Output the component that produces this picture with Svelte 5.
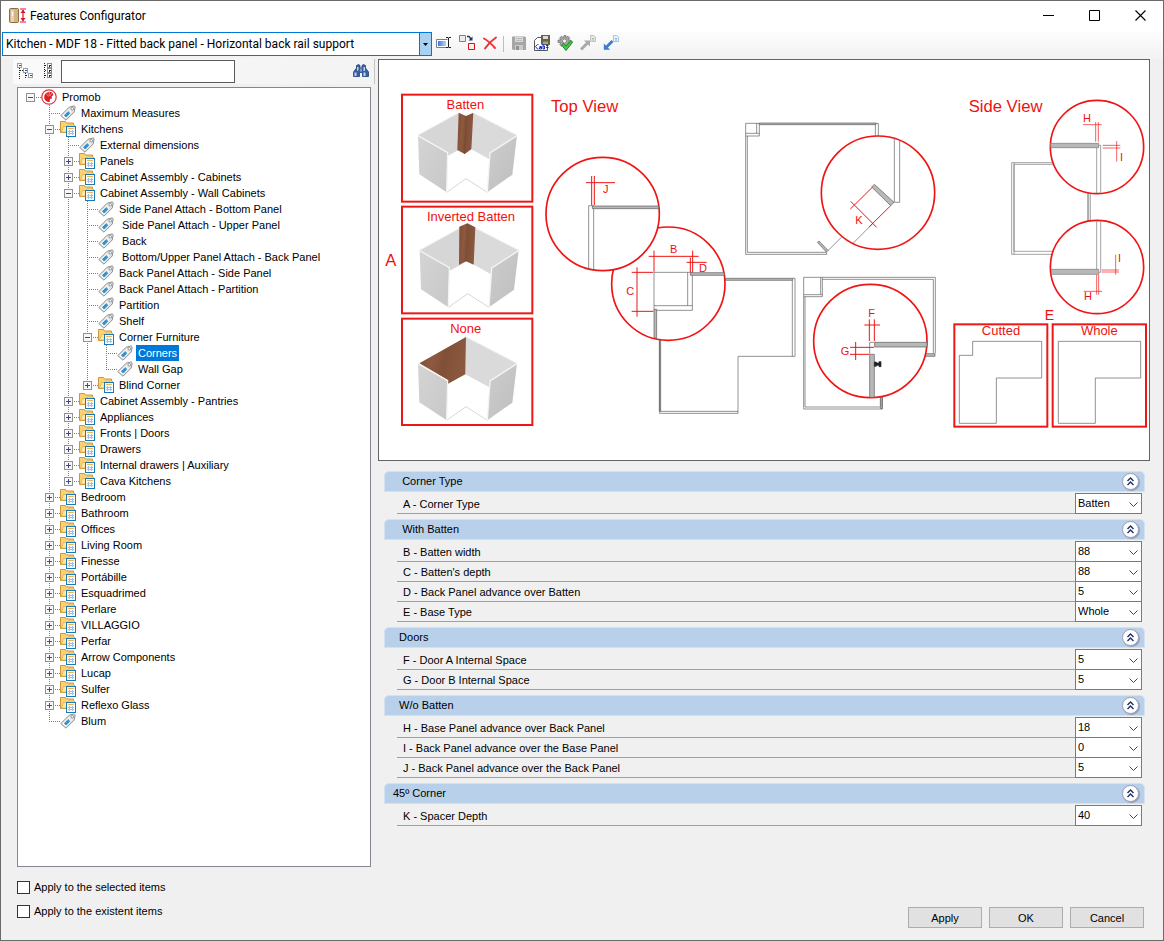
<script>
  const leaf = (name) => ({ name, leaf: true });
  const folder = (name, children = [], open = false) => ({ name, children, open });

  let tree = $state([
    {
      name: 'Promob',
      root: true,
      open: true,
      children: [
        leaf('Maximum Measures'),
        folder('Kitchens', [
          leaf('External dimensions'),
          folder('Panels'),
          folder('Cabinet Assembly - Cabinets'),
          folder('Cabinet Assembly - Wall Cabinets', [
            leaf('Side Panel Attach - Bottom Panel'),
            leaf(' Side Panel Attach - Upper Panel'),
            leaf(' Back'),
            leaf(' Bottom/Upper Panel Attach - Back Panel'),
            leaf('Back Panel Attach - Side Panel'),
            leaf('Back Panel Attach - Partition'),
            leaf('Partition'),
            leaf('Shelf'),
            folder('Corner Furniture', [leaf('Corners'), leaf('Wall Gap')], true),
            folder('Blind Corner')
          ], true),
          folder('Cabinet Assembly - Pantries'),
          folder('Appliances'),
          folder('Fronts | Doors'),
          folder('Drawers'),
          folder('Internal drawers | Auxiliary'),
          folder('Cava Kitchens')
        ], true),
        folder('Bedroom'),
        folder('Bathroom'),
        folder('Offices'),
        folder('Living Room'),
        folder('Finesse'),
        folder('Portábille'),
        folder('Esquadrimed'),
        folder('Perlare'),
        folder('VILLAGGIO'),
        folder('Perfar'),
        folder('Arrow Components'),
        folder('Lucap'),
        folder('Sulfer'),
        folder('Reflexo Glass'),
        leaf('Blum')
      ]
    }
  ]);

  let selected = $state('Corners');

  let sections = $state([
    { title: '   Corner Type', open: true, rows: [['A - Corner Type', 'Batten']] },
    {
      title: '   With Batten',
      open: true,
      rows: [
        ['B - Batten width', '88'],
        ["C - Batten's depth", '88'],
        ['D - Back Panel advance over Batten', '5'],
        ['E - Base Type', 'Whole']
      ]
    },
    {
      title: '  Doors',
      open: true,
      rows: [
        ['F - Door A Internal Space', '5'],
        ['G - Door B Internal Space', '5']
      ]
    },
    {
      title: '  W/o Batten',
      open: true,
      rows: [
        ['H - Base Panel advance over Back Panel', '18'],
        ['I - Back Panel advance over the Base Panel', '0'],
        ['J - Back Panel advance over the Back Panel', '5']
      ]
    },
    { title: '45º Corner', open: true, rows: [['K - Spacer Depth', '40']] }
  ]);
</script>

{#snippet promobIcon()}
  <svg class="icon" viewBox="0 0 16 16">
    <circle cx="8" cy="8" r="7.2" fill="#fff" stroke="#d9363c" stroke-width="1.2" />
    <path d="M7.500 3C9.500 2.400 12 3.400 12.300 6L10.600 7.600l.4 2-2 .4-.3 3C5.500 13 3.200 11 3.200 8.200 3.200 5.500 5 3.500 7.500 3z" fill="#dc1f28" />
    <path d="M8.200 3v4M5.200 4.500l2.300 3M10.800 4l-2 3" stroke="#f29a9c" stroke-width=".8" fill="none" />
  </svg>
{/snippet}

{#snippet tagIcon()}
  <svg class="icon" viewBox="0 0 16 16">
    <path d="M.8 10.600 9.200 2.200 14.200.9l1 .9-1 5.200-8.200 8.200z" fill="#e9e9ea" stroke="#8b8d90" />
    <path d="M2.700 10.700 5.600 13.500 11.200 8 8.300 5.200z" fill="#fff" />
    <path d="M3.900 10.500 6 12.600 10.400 8.200 8.300 6.100z" fill="#3c9bd6" />
    <path d="m5.200 9.400 2 2M6.700 7.900l2 2" stroke="#1f6fa8" stroke-width=".8" />
    <circle cx="12.300" cy="3.800" r="1.300" fill="#fff" stroke="#85878a" stroke-width=".9" />
  </svg>
{/snippet}

{#snippet folderIcon()}
  <svg class="icon" viewBox="0 0 16 16">
    <path d="M.5 11.500v-11h5l1 1.500h7v9.500z" fill="#f9d374" stroke="#d0943a" />
    <path d="M1.500 11 3.500 5.500H8V4h6.500v3l-2 4z" fill="#fde9a4" stroke="#e0ae52" stroke-width=".8" />
    <rect x="6.500" y="5.500" width="9" height="10" fill="#fff" stroke="#1879b4" />
    <path d="M8 7.500h6" stroke="#f2b45a" />
    <path d="M9.500 9v5M12.500 9v5M8 10.500h6M8 12.500h6" stroke="#9cc3e6" />
  </svg>
{/snippet}

{#snippet node(item)}
  <li role="treeitem" aria-selected={selected === item.name} class:top={item.root}>
    <div class="node">
      <span class="branch">
        {#if !item.leaf}
          <button class="toggle" aria-label={item.open ? 'Collapse' : 'Expand'} onclick={() => (item.open = !item.open)}>
            <svg viewBox="0 0 9 9" shape-rendering="crispEdges">
              <rect x=".5" y=".5" width="8" height="8" fill="#f7f7f7" stroke="#919191" />
              <path d={item.open ? 'M2 4.500h5' : 'M2 4.500h5M4.500 2v5'} stroke="#3b4f8c" />
            </svg>
          </button>
        {/if}
      </span>
      {#if item.root}{@render promobIcon()}{:else if item.leaf}{@render tagIcon()}{:else}{@render folderIcon()}{/if}
      <button class="name" class:selected={selected === item.name} onclick={() => (selected = item.name)}>{item.name}</button>
    </div>
    {#if item.open && item.children?.length}
      <ul role="group">
        {#each item.children as child}{@render node(child)}{/each}
      </ul>
    {/if}
  </li>
{/snippet}

{#snippet cabinet(kind)}
  <path d="M200 397 258 356 322 397" fill="none" stroke="#d8d8d8" stroke-width="3" />
  {#if kind === 'none'}
    <path d="M258 147 411 226 330 278 328 298 256 259z" fill="#dadada" />
    <path d="M258 147 118 226 203 276V288L256 259z" fill="url(#wood)" />
    <path d="M258 147 411 226" stroke="#eee" stroke-width="3" />
  {:else}
    <path d="M114 226 257 147V258L203 288z" fill="#d6d6d6" />
    <path d="M257 147 411 226 330 278 328 298 257 258z" fill="#dadada" />
    <path d="M114 226 257 147 411 226" fill="none" stroke="#ececec" stroke-width="3" />
    {#if kind === 'batten'}
      <path d="M232 140H284V160L258 170 234 160z" fill="#fff" />
      <path d="M236 158 258 168 280 158 274 268 254 282 232 270z" fill="url(#wood)" />
      <path d="M258 168 254 282" stroke="#744731" stroke-width="2" />
    {:else}
      <path d="M233 155 257 145 281 157 276 269 253 259 232 270z" fill="url(#wood)" />
      <path d="M257 146 253 259" stroke="#7a4c35" stroke-width="2" />
    {/if}
  {/if}
  <path d="M114 226 203 278 200 397 118 343z" fill="url(#panelLeft)" />
  <path d="M411 226 330 278 322 397 397 344z" fill="url(#panelRight)" />
  <path d="M114 227 203 278 200 397M411 227 330 279 322 397" fill="none" stroke="#f4f4f4" stroke-width="4" />
{/snippet}

<div class="window">
  <header class="titlebar">
    <svg class="app-icon" viewBox="0 0 17 16">
      <rect x=".5" y=".5" width="9" height="14" rx="1" fill="#d3b487" stroke="#8a6c45" />
      <path d="M2 2h3v12H2z" fill="#e8d3b2" />
      <path d="M3.500 4v4" stroke="#fff" />
      <path d="M11 1h6M11 14h6M14 2v11" stroke="#e0142c" stroke-width="1.200" />
      <path d="m11.500 5 2.500-3.500L16.500 5zM11.500 10l2.500 3.500 2.500-3.500z" fill="#e0142c" />
    </svg>
    <h1>Features Configurator</h1>
    <div class="window-buttons">
      <button aria-label="Minimize"><svg viewBox="0 0 11 11"><path d="M0 5.500h11" stroke="#000" /></svg></button>
      <button aria-label="Maximize"><svg viewBox="0 0 11 11"><path d="M.5.5h10v10H.5z" fill="none" stroke="#000" /></svg></button>
      <button aria-label="Close"><svg viewBox="0 0 11 11"><path d="m.5.500 10 10m0-10-10 10" stroke="#000" stroke-width="1.100" /></svg></button>
    </div>
  </header>

  <div class="toolbar">
    <div class="config">
      <select aria-label="Configuration">
        <option>Kitchen - MDF 18 - Fitted back panel - Horizontal back rail support</option>
      </select>
      <span class="config-arrow"><svg viewBox="0 0 5 3"><path d="M0 0h5L2.500 3z" /></svg></span>
    </div>
    <button class="tool" aria-label="Rename">
      <svg viewBox="0 0 16 16">
        <path d="M11.500 4.500H.5v8h12" fill="#fff" stroke="#6e7f96" />
        <path d="M2 6h8v5H2z" fill="url(#blueBar)" />
        <path d="M10 2.500h2l.5.500.5-.5h2M12.500 3v9M10 12.500h2l.5-.5.500.5h2" fill="none" stroke="#222" />
      </svg>
    </button>
    <button class="tool" aria-label="Duplicate">
      <svg viewBox="0 0 16 16">
        <path d="M.5.500h6v6h-6z" fill="#ececec" stroke="#807f88" />
        <path d="M9.500 8.500h6v6h-6z" fill="#f6f0f0" stroke="#d11" />
        <path d="M8 1.500h2l2 2.500" fill="none" stroke="#1a3566" stroke-width="1.400" />
        <path d="M9.500 5.500h4v-4z" fill="#1a3566" />
      </svg>
    </button>
    <button class="tool" aria-label="Delete">
      <svg viewBox="0 0 16 16">
        <path d="M2 3.500c4 2.200 7.500 5.500 11 9.500M14 2.500C9.500 5.500 6 9 3 13.500" fill="none" stroke="#f23030" stroke-width="1.900" stroke-linecap="round" />
      </svg>
    </button>
    <span class="separator"></span>
    <button class="tool" aria-label="Save">
      <svg viewBox="0 0 16 16">
        <path d="M1 1.500h13l1 1V15H2l-1-1z" fill="#a6a6a6" />
        <path d="M4 2h8v5H4z" fill="#dadada" />
        <path d="M5 3.500h6M5 5.500h6" stroke="#bcbcbc" />
        <path d="M4 10h8v5H4z" fill="#cacaca" />
        <path d="M5 11h3v4H5z" fill="#929292" />
      </svg>
    </button>
    <button class="tool" aria-label="Save as">
      <svg viewBox="0 0 16 16">
        <path d="M3.500 2.500h10v13H.5v-10z" fill="#fff" stroke="#555" />
        <path d="M7 0h9v9.500l-.5.500H8L7 9z" fill="#62634f" />
        <path d="M9 1h5v3H9z" fill="#dedccb" />
        <path d="M9 6.500h5V9H9z" fill="#a5a391" />
        <path d="M4.500 9.500h-1l-2 2 2 2.500h1M5.500 11.500h2v2.500h-2v-1.500h2M9 9v5h1.500v-3H9M12 10.500h2.500M12 12.500h2.500" fill="none" stroke="#1a2fd0" />
      </svg>
    </button>
    <button class="tool" aria-label="Validate">
      <svg viewBox="0 0 16 16">
        <path d="M7 .5h2v2l2-1.300 1.700 1.700L11.300 5h2.200v2.500h-2.200l1.300 2L11 11.300l-2-1V12H6.500v-2l-2 1.300L2.700 9.500 4 7.500H1V5h2.800L2.600 3 4.300 1.300 6.300 2.500z" fill="#a5a5a5" stroke="#6f6f6f" stroke-width=".7" />
        <circle cx="7.500" cy="6" r="2" fill="#f4f4f4" stroke="#777" stroke-width=".7" />
        <path d="m4.500 10 2-1.500L9 11l5-5.500 1.700 1.700L9 15.500z" fill="#43c643" stroke="#197a24" stroke-width=".9" />
      </svg>
    </button>
    <button class="tool" aria-label="Export">
      <svg viewBox="0 0 16 16">
        <path d="m1 14.500 6.500-6.500" stroke="#a9a9a9" stroke-width="3" />
        <path d="M4 5.500h6v6z" fill="#a9a9a9" />
        <path d="M10.500.5h3l2 1.500v4.500h-5z" fill="#e6e6e6" stroke="#c2c2c2" />
        <path d="M12 3.500h2M12 5h2" stroke="#b8b8b8" />
      </svg>
    </button>
    <button class="tool" aria-label="Import">
      <svg viewBox="0 0 16 16">
        <path d="m3.500 12 6-6" stroke="#3d7dca" stroke-width="2.800" />
        <path d="M.8 8.500v6.300h6.300z" fill="#3d7dca" />
        <path d="M10.500.5h3l2 1.500v4.500h-5z" fill="#eaf3fc" stroke="#a3c4e8" />
        <path d="M12 3.500h2M12 5h2" stroke="#8fb7e2" />
      </svg>
    </button>
  </div>

  <main>
    <aside>
      <div class="search">
        <button class="tool" aria-label="Collapse all">
          <svg viewBox="0 0 16 16" shape-rendering="crispEdges">
            <path d="M2.500 5v11M3 7.500h3M8.500 10v5M9 12.500h2" stroke="#222" stroke-dasharray="1 1" />
            <path d="M.5.500h4v4h-4zM6.500 5.500h4v4h-4zM11.500 10.500h4v4h-4z" fill="#fff" stroke="#93a0ac" />
            <path d="M1.500 2.500h2M7.500 7.500h2M12.500 12.500h2" stroke="#234d85" />
          </svg>
        </button>
        <button class="tool" aria-label="Expand all">
          <svg viewBox="0 0 16 16" shape-rendering="crispEdges">
            <path d="M4.500 0v16M5 2.500h3M5 7.500h3M5 12.500h3" stroke="#222" stroke-dasharray="1 1" />
            <path d="M7.500.5h4v4h-4zM7.500 5.500h4v4h-4zM7.500 10.500h4v4h-4z" fill="#fff" stroke="#8b8f94" />
            <path d="M8.500 2.500h2M9.500 1.500v2M8.500 7.500h2M9.500 6.500v2M8.500 12.500h2M9.500 11.500v2" stroke="#222" />
          </svg>
        </button>
        <input type="text" aria-label="Search" />
        <button class="tool find" aria-label="Find">
          <svg viewBox="0 0 16 16">
            <path d="M3.500 2.500 5.500 1.500l1.500 1V5h2V2.500l1.500-1 2 1v2.500L15.500 9v4.500h-6V9.500h-3v4h-6V9l3-4z" fill="#3a5f9e" stroke="#20427c" stroke-width=".8" />
            <path d="M1.500 9.500h2V13h-2zM10.500 9.500h2V13h-2zM4 4h1.500v3L4 8zM10.500 4H12v4h-1.500z" fill="#bcd3ee" />
            <path d="M7 5.500h2v3H7z" fill="#7f9fcb" />
          </svg>
        </button>
      </div>

      <div class="tree">
        <ul role="tree" aria-label="Features">
          {#each tree as item}{@render node(item)}{/each}
        </ul>
      </div>

      <div class="checks">
        <label><input type="checkbox" /> Apply to the selected items</label>
        <label><input type="checkbox" /> Apply to the existent items</label>
      </div>
    </aside>

    <section class="details">
      <div class="preview">
        <svg viewBox="0 0 2310 1200" role="img" aria-label="Corner diagrams">
          <defs>
            <linearGradient id="wood" x1="0" x2="1" y1="0" y2=".2">
              <stop offset="0" stop-color="#7d4b33" /><stop offset=".35" stop-color="#8d5a40" />
              <stop offset=".6" stop-color="#805036" /><stop offset="1" stop-color="#8a583e" />
            </linearGradient>
            <linearGradient id="panelLeft" x1="0" x2="1" y1="0" y2="1">
              <stop offset="0" stop-color="#d4d4d4" /><stop offset="1" stop-color="#c8c8c8" />
            </linearGradient>
            <linearGradient id="panelRight" x1="0" x2="1" y1="0" y2="1">
              <stop offset="0" stop-color="#cdcdcd" /><stop offset="1" stop-color="#bebebe" />
            </linearGradient>
            <linearGradient id="blueBar">
              <stop offset="0" stop-color="#3f78d8" /><stop offset="1" stop-color="#b9d4f8" />
            </linearGradient>
          </defs>

          <!-- corner type frames -->
          <g transform="translate(3 0)">
            <g class="frame">
              <rect x="66" y="104" width="391" height="321" />
              <rect x="66" y="440" width="391" height="320" />
              <rect x="66" y="776" width="391" height="319" />
            </g>
            {@render cabinet('batten')}
            <g transform="translate(5 345)">{@render cabinet('inverted')}</g>
            <g transform="translate(0 684)">{@render cabinet('none')}</g>
            <text class="caption mid" x="256" y="147">Batten</text>
            <text class="caption mid" x="273" y="482">Inverted Batten</text>
            <text class="caption mid" x="257" y="818">None</text>
            <text class="heading" x="16" y="618">A</text>
            <text class="heading" x="513" y="157">Top View</text>
          </g>

          <!-- L-shaped base with B, C and D details -->
          <g transform="translate(663 480)">
            <g class="line">
              <path class="solid" d="M376 175H578V181H376zM178 361H182V574H178z" />
              <path d="M578 175H585V409H414V580H179V361M577 181V409M182 574H414" />
            </g>
            <circle cx="205" cy="191" r="170" />
            <g class="line">
              <path d="M162 157H277V271H162zM263 157V257M162 257H277" />
              <path class="solid" d="M271 158H373V166H271zM162 268H170V355L162 352z" />
            </g>
            <path class="dim" d="M162 92V155M278 92V157M146 109H296M260 127H320M271 113V157M111 142V290M95 157H160M95 274H160" />
            <text class="mark" x="210" y="98">B</text>
            <text class="mark" x="297" y="155">D</text>
            <text class="mark" x="79" y="225">C</text>
          </g>

          <!-- J detail -->
          <g transform="translate(3 0)">
            <circle cx="668" cy="462" r="170" />
            <g class="line">
              <path d="M626 627V437H641V630" />
              <path class="solid" d="M637 438H836V446H637z" />
            </g>
            <path class="dim" d="M635 348V435M643 348V435M618 368H705" />
            <text class="mark" x="669" y="399">J</text>
          </g>

          <!-- 45 degree cabinet -->
          <g transform="translate(663 90)">
            <g class="line">
              <path d="M437 100H478V138H437zM470 100V130M437 130H478M826 100H835V145M826 100V145M437 138V493H680V487H442V138M724 442 682 484" />
              <path class="solid" d="M478 99H828V104H478zM652 457 657 453 684 481 679 486z" />
            </g>
            <circle cx="834" cy="308" r="170" />
            <g class="line">
              <path d="M883 146V337H899V151M818 401 760 459" />
              <path class="solid" d="M823 283 815 291 872 347 882 337z" />
            </g>
            <path class="dim" d="M817 292 751 357M752 334 830 412M872 347 807 411" />
            <text class="mark" x="766" y="402">K</text>
          </g>

          <!-- door cabinet with F and G details -->
          <g transform="translate(663 480)">
            <g class="line">
              <path d="M611 172H667V230H611zM662 172V224M611 224H667M667 172H1006V400M1000 178V400M667 178H1000M611 230V567H847V530M615 230V561H841V532" />
              <path class="solid" d="M970 401H1005V409H970zM842 525H847V566H842z" />
            </g>
            <circle cx="811" cy="363" r="170" />
            <g class="line">
              <path d="M809 403V367H824" />
              <path class="solid" d="M824 367H981V381H824zM809 403H823V532H809z" />
              <path class="hinge" d="M823 426H829V429H837V425H843V440H837V436H829V439H823z" />
            </g>
            <path class="dim" d="M808 298V363M823 298V363M793 315H840M750 382H822M750 403H807M767 366V420" />
            <text class="mark" x="805" y="291">F</text>
            <text class="mark" x="722" y="405">G</text>
          </g>

          <!-- side view -->
          <g transform="translate(1683 0)">
            <text class="heading" x="86" y="157">Side View</text>
            <g class="line light">
              <path d="M360 308H215V583H360M360 313H222V574H360M222 308V583M443 395V490M446 395V490M451 395V490" />
            </g>
            <circle cx="471" cy="261" r="140" />
            <circle cx="471" cy="621" r="140" />
            <g class="line light">
              <path d="M470 263V400M476 256H482V400M470 482V637M482 482V637H476" />
              <path class="solid" d="M332 250H476V263H332zM334 628H476V643H334z" />
            </g>
            <path class="dim thin" d="M467 186V245M475 186V245M429 194H485M488 256H541M488 264H541M530 243V305M527 584V644M485 630H537M485 636H537M470 644V704M476 644V704M431 694H486" />
            <text class="mark" x="429" y="187">H</text>
            <text class="mark" x="540" y="302">I</text>
            <text class="mark" x="534" y="606">I</text>
            <text class="mark" x="432" y="720">H</text>
          </g>

          <!-- base type frames -->
          <g transform="translate(1683 540)">
            <g class="frame">
              <rect x="43" y="253" width="279" height="307" />
              <rect x="338" y="253" width="280" height="307" />
            </g>
            <g class="line">
              <path d="M98 304H305V414H169V550H58V346H98zM355 304H602V414H466V550H355z" />
            </g>
            <text class="letter" x="314" y="241">E</text>
            <text class="caption mid" x="183" y="286">Cutted</text>
            <text class="caption mid" x="478" y="286">Whole</text>
          </g>
        </svg>
      </div>

      <div class="sections">
        {#each sections as section, s}
          <section class="group">
            <header>
              <h2>{section.title}</h2>
              <button aria-label="Toggle section" aria-expanded={section.open} onclick={() => (section.open = !section.open)}>
                <svg viewBox="0 0 9 9"><path d="m1.500 4 3-3 3 3M1.500 8l3-3 3 3" fill="none" stroke="#1d2f66" stroke-width="1.400" /></svg>
              </button>
            </header>
            {#if section.open}
              <div class="rows">
                {#each section.rows as [label, value], r}
                  <div class="row">
                    <label for="f{s}-{r}">{label}</label>
                    <div class="combo">
                      <select id="f{s}-{r}"><option>{value}</option></select>
                      <svg viewBox="0 0 9 5"><path d="m.5.500 4 4 4-4" fill="none" stroke="#444" /></svg>
                    </div>
                  </div>
                {/each}
              </div>
            {/if}
          </section>
        {/each}
      </div>

      <footer>
        <button>Apply</button>
        <button>OK</button>
        <button>Cancel</button>
      </footer>
    </section>
  </main>
</div>

<style>
  :global(body) {
    margin: 0;
  }
  .window {
    box-sizing: border-box;
    min-height: 100vh;
    display: flex;
    flex-direction: column;
    border: 1px solid #6a6a6a;
    background: #f0f0f0;
    color: #000;
    font: 11px/16px 'Liberation Sans', Arial, sans-serif;
  }
  button {
    font: inherit;
    color: inherit;
    padding: 0;
    border: 0;
    background: none;
  }
  select,
  input {
    font: inherit;
    color: inherit;
    margin: 0;
  }
  select {
    appearance: none;
    border-radius: 0;
    background: #fff;
  }
  ul {
    list-style: none;
    margin: 0;
    padding: 0;
  }

  .titlebar {
    display: flex;
    align-items: center;
    height: 30px;
    padding-left: 8px;
    background: #fff;
  }
  .app-icon {
    width: 17px;
    height: 16px;
  }
  h1 {
    flex: 1;
    margin: 0 0 0 4px;
    font: 12px/16px Roboto, 'Segoe UI', sans-serif;
  }
  .window-buttons {
    display: flex;
  }
  .window-buttons button {
    display: grid;
    place-items: center;
    width: 46px;
    height: 28px;
    margin-bottom: 2px;
  }
  .window-buttons svg {
    width: 11px;
    height: 11px;
  }

  .toolbar {
    display: flex;
    align-items: center;
    height: 28px;
    padding: 0 0 0 1px;
    box-sizing: border-box;
    background: linear-gradient(#fdfdfd, #f2f2f2);
  }
  .config {
    display: grid;
    width: 430px;
    height: 24px;
    margin-bottom: 2px;
  }
  .config select,
  .config-arrow {
    grid-area: 1 / 1;
  }
  .config select {
    border: 1px solid #0078d7;
    padding: 0 16px 0 3px;
    font: 12px/16px Roboto, 'Segoe UI', sans-serif;
  }
  .config-arrow {
    justify-self: end;
    display: grid;
    place-items: center;
    box-sizing: border-box;
    width: 13px;
    border: 1px solid #0078d7;
    background: #a9d1f2;
    pointer-events: none;
  }
  .config-arrow svg {
    width: 5px;
    height: 3px;
  }
  .tool {
    display: grid;
    place-items: center;
    width: 23px;
    height: 22px;
    margin-bottom: 4px;
  }
  .tool svg {
    width: 16px;
    height: 16px;
  }
  .separator {
    width: 1px;
    height: 16px;
    margin: 0 3px 2px 2px;
    background: #bdbdbd;
  }

  main {
    flex: 1;
    display: grid;
    grid-template-columns: 377px 1fr;
  }
  aside {
    display: flex;
    flex-direction: column;
  }
  .search {
    display: flex;
    align-items: center;
    height: 25px;
    margin: 0 3px 3px 12px;
    box-sizing: border-box;
    border-right: 1px solid #c4c4c4;
    background: linear-gradient(90deg, #fafafa, #f3f3f3);
  }
  .search .tool {
    margin: 0 0 2px;
  }
  .search input {
    box-sizing: border-box;
    width: 174px;
    height: 23px;
    margin-left: 2px;
    border: 1px solid #5a5a5a;
    background: #fff;
  }
  .search .find {
    margin: 0 2px 2px auto;
  }
  .tree {
    flex: 1;
    box-sizing: border-box;
    margin: 0 7px 0 16px;
    padding: 1px 3px;
    border: 1px solid #828790;
    background: #fff;
  }
  .tree li {
    background: repeating-linear-gradient(#808080 0 1px, transparent 1px 2px) 9px 0 / 1px 100% no-repeat;
  }
  .tree li:last-child {
    background-size: 1px 9px;
  }
  .tree li.top {
    background: none;
  }
  .tree li ul {
    margin-left: 19px;
  }
  .node {
    display: flex;
    height: 16px;
    background: repeating-linear-gradient(90deg, #808080 0 1px, transparent 1px 2px) 9px 8px / 12px 1px no-repeat;
  }
  .branch {
    display: flex;
    align-items: center;
    width: 20px;
    padding-left: 5px;
    box-sizing: border-box;
  }
  .toggle,
  .toggle svg {
    display: block;
    width: 9px;
    height: 9px;
  }
  .icon {
    width: 16px;
    height: 16px;
    margin-right: 3px;
    overflow: visible;
  }
  .name {
    padding: 0 2px;
    white-space: pre;
    line-height: 16px;
  }
  .name.selected {
    background: #0078d7;
    color: #fff;
  }
  .checks {
    display: flex;
    flex-direction: column;
    gap: 8px;
    padding: 12px 16px 21px;
  }
  .checks label {
    display: flex;
    align-items: center;
    gap: 4px;
  }
  .checks input {
    box-sizing: border-box;
    appearance: none;
    width: 13px;
    height: 13px;
    border: 1px solid #333;
    background: #fff;
  }
  .checks input:checked {
    background: #0078d7;
  }

  .details {
    display: flex;
    flex-direction: column;
    padding-right: 13px;
  }
  .preview {
    border: 1px solid #646464;
    background: #fff;
  }
  .preview svg {
    display: block;
    width: 100%;
  }
  .preview circle {
    fill: #fff;
    stroke: #f01414;
    stroke-width: 5px;
  }
  .frame rect {
    fill: none;
    stroke: #ec1818;
    stroke-width: 6px;
  }
  .line path {
    fill: none;
    stroke: #5c5c5c;
    stroke-width: 2px;
  }
  .line.light path {
    stroke: #777;
  }
  .line .solid,
  .line.light .solid {
    fill: #b8b8b8;
  }
  .line .hinge {
    fill: #222;
    stroke: #222;
  }
  .dim {
    fill: none;
    stroke: #f01414;
    stroke-width: 3px;
  }
  .dim.thin {
    stroke-width: 2px;
  }
  .preview text {
    fill: #f01010;
    font-family: 'Liberation Sans', Arial, sans-serif;
  }
  .caption {
    font-size: 39px;
  }
  .mid {
    text-anchor: middle;
  }
  .heading {
    font-size: 50px;
  }
  .letter {
    font-size: 42px;
  }
  .mark {
    font-size: 33px;
  }

  .sections {
    padding: 10px 5px 0 6px;
  }
  .group {
    margin-bottom: 5px;
  }
  .group header {
    display: flex;
    align-items: center;
    justify-content: space-between;
    box-sizing: border-box;
    height: 21px;
    padding: 0 5px 0 8px;
    border: 1px solid #d3e1f2;
    border-radius: 5px 5px 0 0;
    background: #b9d0ea;
  }
  h2 {
    margin: 0;
    padding-bottom: 2px;
    font: inherit;
    white-space: pre;
  }
  .group header button {
    display: grid;
    place-items: center;
    width: 17px;
    height: 17px;
    box-sizing: border-box;
    border: 1px solid #9a9db5;
    border-radius: 50%;
    background: #fff;
    box-shadow: 1px 1px 1px #8f9db8;
  }
  .group header svg {
    width: 9px;
    height: 9px;
  }
  .rows {
    margin: 2px 3px 0 13px;
  }
  .row {
    display: flex;
    align-items: flex-end;
    justify-content: space-between;
    box-sizing: border-box;
    height: 20px;
    padding-left: 6px;
    box-shadow: inset 0 -1px #a0a0a0;
  }
  .row label {
    line-height: 20px;
  }
  .combo {
    display: grid;
    align-items: center;
    width: 67px;
    height: 21px;
  }
  .combo select,
  .combo svg {
    grid-area: 1 / 1;
  }
  .combo select {
    height: 21px;
    padding: 0 14px 2px 2px;
    border: 1px solid #7a7a7a;
  }
  .combo svg {
    justify-self: end;
    width: 9px;
    height: 5px;
    margin: 1px 4px 0 0;
    pointer-events: none;
  }

  footer {
    display: flex;
    justify-content: flex-end;
    gap: 7px;
    margin-top: auto;
    padding: 12px 6px 12px;
  }
  footer button {
    box-sizing: border-box;
    width: 74px;
    height: 21px;
    border: 1px solid #adadad;
    background: #e1e1e1;
  }
</style>
